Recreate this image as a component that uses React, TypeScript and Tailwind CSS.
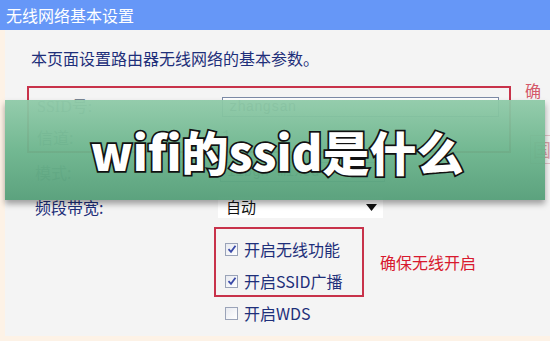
import React from "react";

const cjk = { fontFamily: '"Noto Sans CJK SC", "Noto Sans", sans-serif' };
const serifCjk = { fontFamily: '"Liberation Serif", "Noto Sans CJK SC", serif' };
const mono = { fontFamily: '"Liberation Mono", monospace' };

function Check({ checked }: { checked: boolean }) {
  return (
    <div className="w-[13px] h-[13px] border border-[#9aa3b8] bg-gradient-to-br from-[#e8eaf0] to-[#ffffff] flex items-center justify-center">
      {checked && (
        <svg width="10" height="10" viewBox="0 0 10 10">
          <path d="M1.5 5.2 L4 7.8 L8.5 1.8" stroke="#3a4aa8" strokeWidth="1.8" fill="none" />
        </svg>
      )}
    </div>
  );
}

export default function App() {
  return (
    <div className="relative w-[550px] h-[341px] overflow-hidden bg-[#fdf2e6]" style={cjk}>
      {/* title bar */}
      <div className="h-[30px] bg-[#6697f7] flex items-center pl-[6px] text-white text-[16px]">
        无线网络基本设置
      </div>
      {/* body */}
      <div className="ml-[5px] h-[306px] bg-[#f4f4f4] flex flex-col text-[#1e2f7a]">
        <div className="pt-[16px] pl-[26px] text-[16px] leading-[24px]">本页面设置路由器无线网络的基本参数。</div>
        <div className="flex">
          <div className="mt-[16px] ml-[22px] w-[484px] h-[67px] border-2 border-[#c8324a] flex flex-col pl-[8px]">
            <div className="flex items-center h-[32px] mt-[4px]">
              <div className="w-[185px] text-[16px] text-[#7a8794]" style={serifCjk}>SSID号:</div>
              <div className="w-[277px] h-[20px] border border-[#7c8aa6] bg-white flex items-center pl-[6px] text-[14px] text-[#667]" style={mono}>zhangsan</div>
            </div>
            <div className="flex items-center h-[30px]">
              <div className="w-[185px] text-[16px] text-[#7a8794]">信道:</div>
              <div className="text-[14px] text-[#667]" style={mono}>1</div>
            </div>
          </div>
          <div className="mt-[8px] ml-[14px] text-[16px] text-[#d45a6a]">确</div>
        </div>
        <div className="flex items-center h-[30px] mt-[4px] pl-[30px]">
          <div className="w-[185px] text-[16px] text-[#7a8794]">模式:</div>
          <div className="w-[165px] h-[20px] border border-[#7c8aa6] bg-white flex items-center pl-[6px] text-[14px] text-[#667]" style={mono}>11bgn mixed</div>
        </div>
        <div className="flex items-center h-[26px] mt-[7px] pl-[30px]">
          <div className="w-[183px] text-[16px]">频段带宽:</div>
          <div className="w-[165px] h-[21px] bg-white flex items-center justify-between pl-[8px] pr-[6px] text-[15px] text-[#111]">
            <span>自动</span>
            <svg width="11" height="7" viewBox="0 0 11 7"><path d="M0 0 H11 L5.5 7 Z" fill="#111" /></svg>
          </div>
        </div>
        <div className="flex items-start mt-[7px]">
          <div className="ml-[209px] w-[150px] h-[70px] border-2 border-[#c8324a] flex flex-col pl-[9px] pt-[8px] gap-[8px]">
            <div className="flex items-center gap-[6px] h-[24px] text-[16px]">
              <Check checked />
              <span>开启无线功能</span>
            </div>
            <div className="flex items-center gap-[6px] h-[24px] text-[16px]">
              <Check checked />
              <span>开启SSID广播</span>
            </div>
          </div>
          <div className="ml-[16px] mt-[23px] text-[16px] leading-[24px] text-[#d8192e]">确保无线开启</div>
        </div>
        <div className="flex items-center gap-[6px] ml-[220px] mt-[4px] h-[24px] text-[16px]">
          <Check checked={false} />
          <span>开启WDS</span>
        </div>
      </div>
      <div className="absolute left-[530px] top-[135px] text-[18px] text-[#d9a0a8] border border-[#e0c0c6] px-[2px]">国</div>

      {/* banner overlay */}
      <div className="absolute left-[5px] top-[100px] w-[540px] h-[100px] bg-gradient-to-b from-[#8fcaa8]/95 via-[#6cb58d]/95 to-[#549e78]/95 shadow-[0_4px_6px_rgba(0,0,0,0.35)] flex items-center justify-center">
        <div
          className="text-white text-[47px] font-black leading-none pl-[4px] [-webkit-text-stroke:3.5px_#111] [paint-order:stroke_fill]"
          style={cjk}
        >
          wifi的ssid是什么
        </div>
      </div>
    </div>
  );
}
